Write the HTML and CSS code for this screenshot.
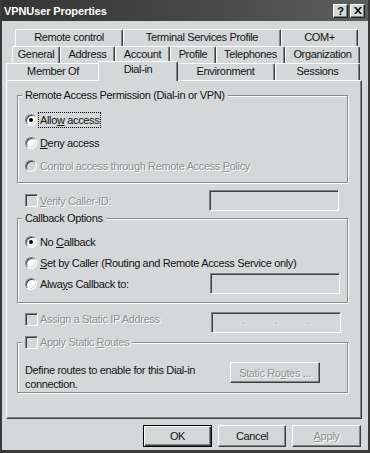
FILE: index.html
```html
<!DOCTYPE html>
<html>
<head>
<meta charset="utf-8">
<link rel="stylesheet" href="styles.css">
</head>
<body>
<div class="window">
  <div class="titlebar">
    <span class="title">VPNUser Properties</span>
    <div class="cbtns">
      <span class="cbtn help">?</span>
      <span class="cbtn close"><svg width="8" height="7" viewBox="0 0 8 7"><path d="M0 0h2l2 2.5L6 0h2L5 3.5 8 7H6L4 4.5 2 7H0l3-3.5z" fill="#000"/></svg></span>
    </div>
  </div>
  <div class="client">
    <div class="tabs">
      <div class="tabrow r1">
        <div class="tab">Remote control</div>
        <div class="tab">Terminal Services Profile</div>
        <div class="tab">COM+</div>
      </div>
      <div class="tabrow r2">
        <div class="tab">General</div>
        <div class="tab">Address</div>
        <div class="tab">Account</div>
        <div class="tab">Profile</div>
        <div class="tab">Telephones</div>
        <div class="tab">Organization</div>
      </div>
      <div class="tabrow r3">
        <div class="tab">Member Of</div>
        <div class="tab active">Dial-in</div>
        <div class="tab">Environment</div>
        <div class="tab">Sessions</div>
      </div>
    </div>
    <div class="panel">
      <div class="group g1">
        <span class="legend">Remote Access Permission (Dial-in or VPN)</span>
        <div class="opt"><span class="radio checked"></span><span class="lbl focus">Allo<u>w</u> access</span></div>
        <div class="opt"><span class="radio"></span><span class="lbl"><u>D</u>eny access</span></div>
        <div class="opt"><span class="radio disabled"></span><span class="lbl dis">Control access through Remote Access <u>P</u>olicy</span></div>
      </div>
      <div class="row verify">
        <span class="check"></span><span class="lbl dis"><u>V</u>erify Caller-ID:</span>
        <span class="field f1"></span>
      </div>
      <div class="group g2">
        <span class="legend">Callback Options</span>
        <div class="opt"><span class="radio checked"></span><span class="lbl">No <u>C</u>allback</span></div>
        <div class="opt"><span class="radio"></span><span class="lbl"><u>S</u>et by Caller (Routing and Remote Access Service only)</span></div>
        <div class="opt"><span class="radio"></span><span class="lbl">Alwa<u>y</u>s Callback to:</span><span class="field f2"></span></div>
      </div>
      <div class="row staticip">
        <span class="check"></span><span class="lbl dis">Assi<u>g</u>n a Static IP Address</span>
        <span class="field ip"><span class="dot">.</span><span class="dot">.</span><span class="dot">.</span></span>
      </div>
      <div class="group g3">
        <span class="legend"><span class="check"></span><span class="lbl dis">Apply Static <u>R</u>outes</span></span>
        <div class="routes">
          <p class="desc">Define routes to enable for this Dial-in connection.</p>
          <span class="btn dis-btn">Static Ro<u>u</u>tes ...</span>
        </div>
      </div>
    </div>
    <div class="buttons">
      <span class="btn default w69">OK</span>
      <span class="btn w68">Cancel</span>
      <span class="btn w69 dis-btn"><u>A</u>pply</span>
    </div>
  </div>
</div>
</body>
</html>
```
FILE: styles.css
```css
* { box-sizing: border-box; }
html, body { margin: 0; padding: 0; background: #3a3a3a; }
body {
  font-family: "Liberation Sans", Arial, sans-serif;
  font-size: 11px;
  letter-spacing: -0.35px;
  color: #141414;
}
u { text-decoration: underline; text-underline-offset: 1px; }

.window {
  width: 370px;
  height: 453px;
  background: #3a3a3a;
  padding: 0 2px 3px 2px;
  display: flex;
  flex-direction: column;
}

.titlebar {
  height: 21px;
  flex: none;
  display: flex;
  align-items: center;
  padding: 0 3px 0 2px;
  background: linear-gradient(90deg, #343434, #4a4a4a 60%, #5e5e5e);
  color: #fff;
}
.title { flex: 1; font-weight: bold; letter-spacing: -0.1px; }
.cbtns { display: flex; gap: 1px; }
.cbtn {
  width: 15px;
  height: 14px;
  display: flex;
  align-items: center;
  justify-content: center;
  background: #d4d8d8;
  border: 1px solid;
  border-color: #fff #222 #222 #fff;
  box-shadow: inset -1px -1px 0 #808484;
  color: #000;
  font-weight: bold;
  font-size: 11px;
  letter-spacing: 0;
}
.cbtn.close { margin-left: 1px; }

.client {
  flex: 1;
  background: #d4d8d8;
  padding: 8px 6px 0 4px;
  display: flex;
  flex-direction: column;
}

.tabs { display: flex; flex-direction: column; }
.tabrow { display: grid; height: 17px; }
.r1 { margin: 0 4px 0 9px; grid-template-columns: 108px 158px 1fr; }
.r2 { margin: 0 2px 0 6px; grid-template-columns: 48px 55px 55px 46px 69px 1fr; }
.r3 { margin: 0 2px 0 0; grid-template-columns: 94px 76px 99px 1fr; }
.tab {
  border-top: 1px solid #fff;
  border-left: 1px solid #fff;
  border-right: 1px solid #404040;
  box-shadow: inset -1px 0 0 #808484;
  border-top-left-radius: 2px;
  border-top-right-radius: 2px;
  background: #d4d8d8;
  text-align: center;
  line-height: 15px;
  white-space: nowrap;
}
.tab.active {
  position: relative;
  z-index: 1;
  margin: -2px -2px -1px -2px;
  line-height: 14px;
}

.panel {
  height: 339px;
  border: 1px solid;
  border-color: #fff #404040 #404040 #fff;
  box-shadow: inset -1px -1px 0 #808484;
  padding: 14px 13px 0 10px;
  display: flex;
  flex-direction: column;
}

.group {
  position: relative;
  border: 1px solid #868a8a;
  box-shadow: 1px 1px 0 #fff, inset 1px 1px 0 #fff;
}
.legend {
  position: absolute;
  top: -7px;
  left: 4px;
  padding: 0 3px;
  background: #d4d8d8;
  line-height: 13px;
  display: flex;
  align-items: center;
  white-space: nowrap;
}
.g1 { padding: 12px 0 5px 7px; }
.g2 { margin-top: 7px; padding: 12px 0 8px 7px; }
.g3 { margin-top: 9px; padding: 19px 0 1px 7px; }

.opt { display: flex; align-items: center; height: 23px; }
.g2 .opt { height: 21px; }

.radio {
  position: relative;
  flex: none;
  width: 12px;
  height: 12px;
  margin-right: 3px;
  border-radius: 50%;
  background: #fff;
  border: 1px solid;
  border-color: #808484 #fff #fff #808484;
  box-shadow: inset 1px 1px 0 #404040, inset -1px -1px 0 #d4d8d8;
}
.radio.disabled { background: #d4d8d8; }
.radio.checked::after {
  content: "";
  position: absolute;
  left: 3px;
  top: 3px;
  width: 4px;
  height: 4px;
  border-radius: 50%;
  background: #000;
}

.check {
  flex: none;
  width: 13px;
  height: 13px;
  margin-right: 2px;
  background: #d4d8d8;
  border: 1px solid;
  border-color: #808484 #fff #fff #808484;
  box-shadow: inset 1px 1px 0 #404040, inset -1px -1px 0 #d4d8d8;
}

.lbl { white-space: nowrap; }
.lbl.focus { outline: 1px dotted #000; outline-offset: 1px; }
.dis { color: #8e9292; text-shadow: 1px 1px 0 #fff; }

.field {
  flex: none;
  width: 130px;
  height: 21px;
  margin-left: auto;
  background: #d4d8d8;
  border: 1px solid;
  border-color: #808484 #fff #fff #808484;
  box-shadow: inset 1px 1px 0 #404040, inset -1px -1px 0 #d4d8d8;
}
.f1 { margin-right: 9px; }
.f2 { margin-right: 7px; }

.row { display: flex; height: 21px; padding-left: 8px; }
.verify { margin-top: 7px; align-items: center; }
.staticip { margin-top: 9px; align-items: flex-start; }
.staticip .check { margin-top: 1px; }
.staticip .lbl { line-height: 15px; }
.ip {
  margin-right: 7px;
  display: flex;
  justify-content: space-evenly;
  align-items: center;
  color: #8e9292;
  text-shadow: 1px 1px 0 #fff;
  font-size: 9px;
  padding-bottom: 3px;
}

.routes { display: flex; align-items: flex-start; }
.desc {
  margin: 0;
  padding-top: 1px;
  width: 185px;
  flex: none;
  line-height: 14px;
}

.btn {
  flex: none;
  display: flex;
  align-items: center;
  justify-content: center;
  height: 22px;
  background: #d4d8d8;
  border: 1px solid;
  border-color: #fff #404040 #404040 #fff;
  box-shadow: inset -1px -1px 0 #808484;
  white-space: nowrap;
}
.routes .btn { width: 90px; height: 21px; margin-left: auto; margin-right: 27px; }
.dis-btn { color: #8e9292; text-shadow: 1px 1px 0 #fff; }
.btn.default {
  border-color: #000;
  box-shadow: inset 1px 1px 0 #fff, inset -1px -1px 0 #404040, inset -2px -2px 0 #808484;
}

.buttons {
  display: flex;
  justify-content: flex-end;
  gap: 6px;
  margin-top: 6px;
  padding-right: 1px;
}
.w69 { width: 69px; }
.w68 { width: 68px; }
```
